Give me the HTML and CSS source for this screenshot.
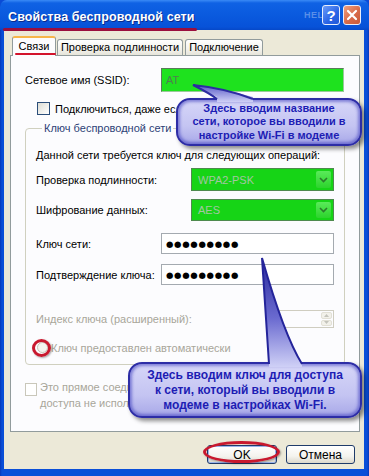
FILE: index.html
```html
<!DOCTYPE html>
<html lang="ru">
<head>
<meta charset="utf-8">
<title>Свойства беспроводной сети</title>
<link rel="stylesheet" href="styles.css">
</head>
<body>
<div class="window">
  <div class="titlebar">
    <span class="title">Свойства беспроводной сети</span>
    <span class="watermark">HELP</span>
    <div class="tbtns">
      <span class="tbtn help">?</span>
      <span class="tbtn close"><svg width="12" height="12" viewBox="0 0 12 12"><path d="M2 2 L10 10 M10 2 L2 10" stroke="#fff" stroke-width="2.2" stroke-linecap="round"/></svg></span>
    </div>
  </div>
  <div class="client">
    <div class="tabs">
      <div class="tab active"><span class="tabtext">Связи</span></div>
      <div class="tab t2">Проверка подлинности</div>
      <div class="tab t3">Подключение</div>
    </div>
    <div class="panel">
      <div class="row ssid">
        <span class="lbl w136">Сетевое имя (SSID):</span>
        <div class="field green">AT</div>
      </div>
      <div class="check">
        <span class="box"></span>
        <span class="ctext">Подключиться, даже если сеть не ведет вещание</span>
      </div>
      <fieldset class="group">
        <legend>Ключ беспроводной сети</legend>
        <div class="desc">Данной сети требуется ключ для следующих операций:</div>
        <div class="row r-auth">
          <span class="lbl w155">Проверка подлинности:</span>
          <div class="select"><span class="sval">WPA2-PSK</span><span class="sarrow"><svg width="9" height="6" viewBox="0 0 9 6"><path d="M1 1 L4.5 4.5 L8 1" fill="none" stroke="#2c7a2c" stroke-width="1.6"/></svg></span></div>
        </div>
        <div class="row r-enc">
          <span class="lbl w155">Шифрование данных:</span>
          <div class="select"><span class="sval">AES</span><span class="sarrow"><svg width="9" height="6" viewBox="0 0 9 6"><path d="M1 1 L4.5 4.5 L8 1" fill="none" stroke="#2c7a2c" stroke-width="1.6"/></svg></span></div>
        </div>
        <div class="row r-key">
          <span class="lbl w125">Ключ сети:</span>
          <div class="field white"><span class="dots">●●●●●●●●●</span></div>
        </div>
        <div class="row r-conf">
          <span class="lbl w125">Подтверждение ключа:</span>
          <div class="field white"><span class="dots">●●●●●●●●●</span></div>
        </div>
        <div class="row r-idx">
          <span class="lbl dis grow">Индекс ключа (расширенный):</span>
          <div class="spin"><span class="sbtns"><span class="sb"><svg width="5" height="3" viewBox="0 0 5 3"><path d="M0 3 L2.5 0 L5 3Z" fill="#c4c4bc"/></svg></span><span class="sb"><svg width="5" height="3" viewBox="0 0 5 3"><path d="M0 0 L2.5 3 L5 0Z" fill="#c4c4bc"/></svg></span></span></div>
        </div>
        <div class="row r-radio">
          <span class="radio"></span>
          <span class="dis rtext">Ключ предоставлен автоматически</span>
        </div>
      </fieldset>
      <div class="check2">
        <span class="box dbox"></span>
        <span class="dis c2text">Это прямое соединение компьютер-компьютер; точки<br>доступа не используются</span>
      </div>
    </div>
    <div class="buttons">
      <button class="btn default">OK</button>
      <button class="btn">Отмена</button>
    </div>
  </div>

  <div class="callout c1">
    <span>Здесь вводим название</span>
    <span>сети, которое вы вводили в</span>
    <span>настройке Wi-Fi в модеме</span>
  </div>
  <svg class="tail tail1" width="90" height="26" viewBox="0 0 90 26">
    <defs><linearGradient id="g1" x1="0" y1="0" x2="0" y2="1"><stop offset="0" stop-color="#5a5ac8"/><stop offset="1" stop-color="#cfd0f6"/></linearGradient></defs>
    <path d="M8 5 C 18 10 26 14 32 17 L32 22 L68 22 L68 17 C 50 12 28 7 8 5 Z" fill="url(#g1)"/>
    <path d="M32 19 C 26 14 18 10 8 5 C 28 7 50 12 68 19" fill="none" stroke="#2c2ca2" stroke-width="2"/>
  </svg>

  <div class="callout c2">
    <span>Здесь вводим ключ для доступа</span>
    <span>к сети, который вы вводили в</span>
    <span>модеме в настройках Wi-Fi.</span>
  </div>
  <svg class="tail tail2" width="60" height="120" viewBox="0 0 60 120">
    <defs><linearGradient id="g2" x1="0" y1="0" x2="0" y2="1"><stop offset="0" stop-color="#2a2a9c"/><stop offset="0.55" stop-color="#6a6ad0"/><stop offset="1" stop-color="#cfd0f6"/></linearGradient></defs>
    <path d="M12 8 L19 113 L19 117 L52 117 L52 113 Q 34 85 12 8 Z" fill="url(#g2)"/>
    <path d="M19 114 L12 8 Q 34 85 52 114" fill="none" stroke="#24249a" stroke-width="2"/>
  </svg>

  <span class="mark m-radio"></span>
  <span class="mark m-ok"></span>
</div>
</body>
</html>
```

FILE: styles.css
```css
* { box-sizing: border-box; }
html, body { margin: 0; padding: 0; }
body {
  width: 369px;
  height: 476px;
  overflow: hidden;
  background: #0a4bd6;
  font-family: "Liberation Sans", Arial, sans-serif;
  font-size: 11px;
  color: #000;
}
.window {
  position: relative;
  width: 369px;
  height: 476px;
  background: linear-gradient(90deg, #0838b8 0, #0a4fd8 2px, #0a4fd8 calc(100% - 2px), #0838b8 100%);
  border-radius: 7px 7px 0 0;
  display: flex;
  flex-direction: column;
}
.titlebar {
  position: relative;
  height: 30px;
  flex: none;
  display: flex;
  align-items: center;
  padding: 0 8px 0 8px;
  border-radius: 7px 7px 0 0;
  background: linear-gradient(#3a8af6 0, #0f62e4 3px, #0a5ade 50%, #0752d8 90%, #0648c8 100%);
}
.title {
  position: relative;
  flex: 1;
  margin-top: 3px;
  color: #fff;
  font-weight: bold;
  font-size: 12.5px;
  letter-spacing: 0.1px;
  text-shadow: 1px 1px 0 #0a2a8a;
  white-space: nowrap;
}
.title::after {
  content: "";
  position: absolute;
  left: -5px;
  width: 194px;
  bottom: -7px;
  height: 3px;
  border-radius: 2px;
  background: #9a0f3e;
}
.watermark {
  position: absolute;
  left: 304px;
  top: 10px;
  font-size: 9px;
  font-weight: bold;
  color: rgba(190, 210, 245, 0.45);
  letter-spacing: 0.5px;
}
.tbtns {
  position: relative;
  z-index: 1;
  display: flex;
  gap: 3px;
}
.tbtn {
  width: 18px;
  height: 20px;
  border: 1px solid #e8eefc;
  border-radius: 3px;
  display: flex;
  align-items: center;
  justify-content: center;
  color: #fff;
  font-weight: bold;
  font-size: 15px;
}
.help { background: linear-gradient(135deg, #6c9cf8, #2a64e6 60%, #2058d8); }
.close { background: linear-gradient(135deg, #f0a080, #d86a48 55%, #c85a3a); }

.client {
  flex: 1;
  margin: 0 5px 7px 4px;
  background: #ece9d8;
  padding-top: 6px;
  display: flex;
  flex-direction: column;
}
.tabs {
  display: flex;
  align-items: flex-end;
  height: 19px;
  margin-left: 8px;
}
.tab {
  height: 16px;
  border: 1px solid #919b9c;
  border-bottom: none;
  border-radius: 3px 3px 0 0;
  background: linear-gradient(#ffffff, #f3f2ec 60%, #e6e4da);
  text-align: center;
  line-height: 15px;
  white-space: nowrap;
}
.tab.active {
  position: relative;
  z-index: 1;
  width: 44px;
  height: 20px;
  margin-bottom: -1px;
  background: #fcfcfe;
  border-top: 2px solid #f7b64a;
  line-height: 17px;
}
.tabtext { position: relative; }
.tab.active::after {
  content: "";
  position: absolute;
  left: 2px;
  width: 41px;
  bottom: 1px;
  height: 2px;
  border-radius: 1px;
  background: #d3132c;
}
.t2 { width: 126px; margin-left: 1px; }
.t3 { width: 78px; margin-left: 2px; }

.panel {
  margin-left: 6px;
  width: 350px;
  height: 377px;
  border: 1px solid #919b9c;
  background: #fcfcfe;
  padding: 12px 0 0 14px;
}
.row { display: flex; align-items: center; }
.lbl { white-space: nowrap; flex: none; }
.w136 { width: 136px; }
.w155 { width: 155px; }
.w125 { width: 125px; }
.grow { flex: 1; }
.dis { color: #a8a69a; }

.ssid { height: 24px; }
.field {
  height: 100%;
  display: flex;
  align-items: center;
  padding-left: 4px;
}
.field.green {
  width: 183px;
  background: #1ee21e;
  border: 1px solid #5a7a5a;
  border-right-color: #9ac89a;
  border-bottom-color: #9ac89a;
  color: #4f7f4f;
}
.field.white {
  width: 173px;
  background: #fff;
  border: 1px solid #a4aab0;
}
.dots {
  font-family: "DejaVu Sans", sans-serif;
  font-size: 8.5px;
  letter-spacing: 0.7px;
  color: #000;
}

.check {
  display: flex;
  align-items: center;
  height: 13px;
  margin-top: 10px;
  padding-left: 12px;
  white-space: nowrap;
  overflow: hidden;
  width: 330px;
}
.box {
  flex: none;
  width: 13px;
  height: 13px;
  border: 1px solid #2b4e7a;
  background: linear-gradient(135deg, #dcdcd4, #ffffff);
}
.ctext { margin-left: 5px; }

.group {
  margin: 6px 0 0 0;
  width: 320px;
  min-width: 0;
  border: 1px solid #d0d0bf;
  border-radius: 4px;
  padding: 0 10px 11px 10px;
}
.group legend {
  padding: 0 2px;
  margin-left: 6px;
  line-height: 14px;
  color: #2c3f76;
}
.desc { margin-top: 13px; height: 14px; line-height: 14px; white-space: nowrap; }
.r-auth { margin-top: 6px; height: 23px; }
.r-enc { margin-top: 8px; height: 22px; }
.r-key { margin-top: 12px; height: 21px; }
.r-conf { margin-top: 10px; height: 21px; }
.r-idx { margin-top: 25px; height: 18px; }
.r-radio { margin-top: 14px; height: 11px; padding-left: 1px; }

.select {
  width: 143px;
  height: 100%;
  display: flex;
  align-items: center;
  justify-content: space-between;
  background: #16d416;
  border: 1px solid #4e8a4e;
  padding: 0 2px 0 6px;
}
.sval { color: #a2c6a2; }
.sarrow {
  width: 15px;
  height: calc(100% - 4px);
  border-radius: 2px;
  background: linear-gradient(#5aea5a, #2cd42c);
  display: flex;
  align-items: center;
  justify-content: center;
}
.spin {
  width: 56px;
  height: 100%;
  border: 1px solid #cfcdc0;
  background: #fcfcfe;
  display: flex;
  justify-content: flex-end;
  padding: 1px;
}
.sbtns { width: 11px; display: flex; flex-direction: column; gap: 1px; }
.sb {
  flex: 1;
  background: #f2f1ea;
  border: 1px solid #e2e0d6;
  border-radius: 2px;
  display: flex;
  align-items: center;
  justify-content: center;
}
.radio {
  width: 11px;
  height: 11px;
  border-radius: 50%;
  border: 1px solid #c6c4b8;
  background: #f4f3ee;
  flex: none;
}
.rtext { margin-left: 3px; white-space: nowrap; }

.check2 {
  display: flex;
  align-items: flex-start;
  margin-top: 14px;
}
.dbox {
  margin-top: 4px;
  width: 12px;
  border-color: #c9c7ba;
  background: #fff;
}
.c2text { margin-left: 3px; line-height: 16px; white-space: nowrap; }

.buttons {
  margin-top: 13px;
  display: flex;
  justify-content: flex-end;
  gap: 9px;
  padding-right: 9px;
}
.btn {
  width: 69px;
  height: 19px;
  padding: 0;
  border: 1px solid #1f3b6a;
  border-radius: 3px;
  background: linear-gradient(#ffffff, #f4f3ee 60%, #dcd8cc);
  font-family: "Liberation Sans", Arial, sans-serif;
  font-size: 12px;
  color: #000;
}
.btn.default {
  width: 70px;
  box-shadow: inset 0 0 0 1px #9ab4ec;
}

.callout {
  position: absolute;
  z-index: 2;
  display: flex;
  flex-direction: column;
  justify-content: center;
  align-items: center;
  border: 2px solid #2d2da6;
  border-radius: 14px;
  background: linear-gradient(#d6d6f8, #c4c4f2 60%, #a8a8e8);
  box-shadow: inset 0 0 3px 2px rgba(60, 60, 190, 0.55), 3px 3px 4px rgba(0, 0, 0, 0.45);
  color: #1d1db4;
  font-weight: bold;
  text-align: center;
  white-space: nowrap;
}
.c1 {
  left: 176px;
  top: 98px;
  width: 186px;
  height: 48px;
  font-size: 11px;
  line-height: 13.5px;
}
.c2 {
  left: 128px;
  top: 362px;
  width: 234px;
  height: 56px;
  font-size: 12px;
  line-height: 15px;
}
.tail { position: absolute; z-index: 3; }
.tail1 { left: 185px; top: 80px; }
.tail2 { left: 250px; top: 250px; }

.mark {
  position: absolute;
  z-index: 4;
  border: 3px solid #c8182e;
  border-radius: 50%;
  box-shadow: 1px 1px 2px rgba(0, 0, 0, 0.35);
}
.m-radio { left: 32px; top: 339px; width: 19px; height: 18px; }
.m-ok { left: 203px; top: 441px; width: 77px; height: 22px; }
```
